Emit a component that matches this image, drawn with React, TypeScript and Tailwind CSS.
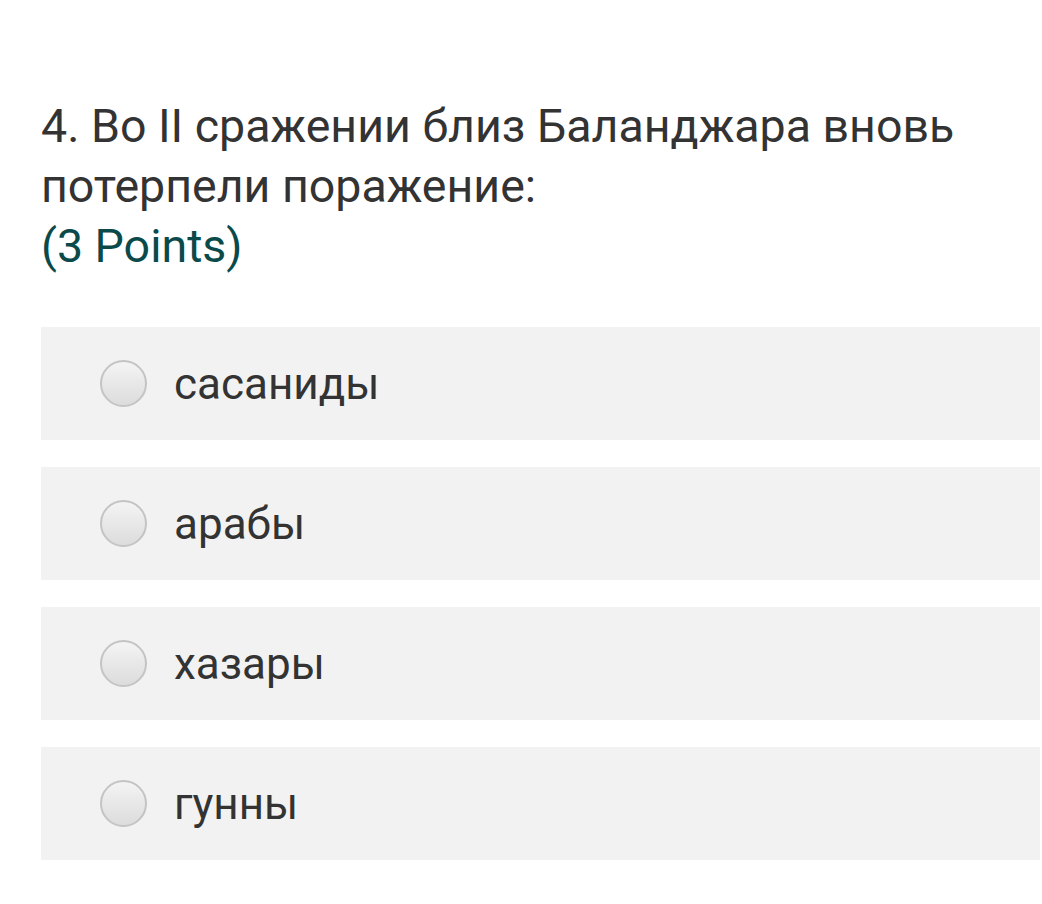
import React from "react";

const options = ["сасаниды", "арабы", "хазары", "гунны"];

function Radio() {
  return (
    <span className="block h-[47px] w-[47px] shrink-0 rounded-full border-2 border-[#c4c4c4] bg-gradient-to-b from-[#f4f4f4] to-[#dcdcdc]" />
  );
}

export default function App() {
  return (
    <div
      className="h-[904px] w-[1042px] bg-white pl-[41px] pr-[2px] pt-[96px] text-[#333333]"
      style={{ fontFamily: "Roboto, 'Noto Sans', sans-serif" }}
    >
      <div className="text-[46.5px] leading-[60px]">
        <p>4. Во II сражении близ Баланджара вновь потерпели поражение:</p>
        <p className="text-[#0b4a4a]">(3 Points)</p>
      </div>
      <div className="mt-[51px] flex flex-col gap-[27px]">
        {options.map((o) => (
          <div key={o} className="flex h-[113px] items-center bg-[#f2f2f2] pl-[59px]">
            <Radio />
            <span className="ml-[27px] text-[44px]">{o}</span>
          </div>
        ))}
      </div>
    </div>
  );
}
